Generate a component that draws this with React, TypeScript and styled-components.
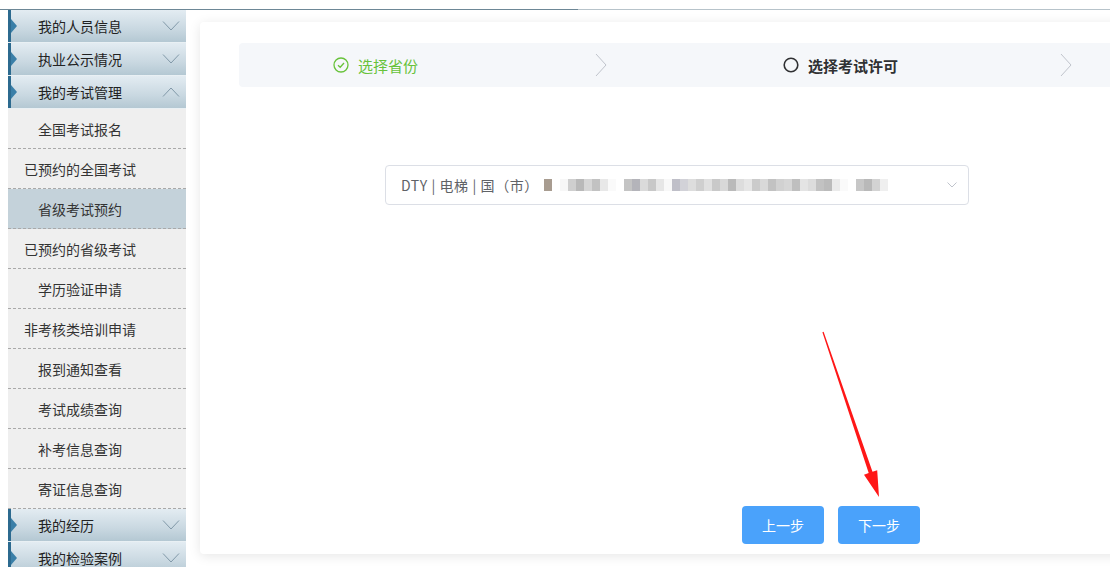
import React from 'react';
import styled, { createGlobalStyle } from 'styled-components';

const GlobalStyle = createGlobalStyle`
  html, body {
    margin: 0;
    padding: 0;
    background: #fff;
    overflow: hidden;
  }
  body {
    font-family: "Noto Sans CJK SC", "Liberation Sans", sans-serif;
    color: #333;
  }
`;

const Page = styled.div`
  position: relative;
  width: 1110px;
  height: 567px;
  overflow: hidden;
  background: #fff;
`;

const TopRule = styled.div`
  height: 9px;
  border-bottom: 1px solid #6d8796;
  background: #fff;
  position: relative;
  &::after {
    content: '';
    position: absolute;
    left: 578px;
    right: 0;
    bottom: -1px;
    height: 1px;
    background: #b7c3ca;
  }
`;

const Body = styled.div`
  display: flex;
  align-items: flex-start;
`;

const Sidebar = styled.nav`
  margin-left: 8px;
  width: 178px;
  flex-shrink: 0;
  display: flex;
  flex-direction: column;
`;

const GroupHeader = styled.div`
  position: relative;
  height: 32px;
  border-bottom: 1px solid #e9f0f4;
  background: linear-gradient(#e3ecf2, #c9d8e1 60%, #b4c8d3);
  display: flex;
  align-items: center;
  padding-left: 30px;
  font-size: 14px;
  color: #222;
  &::before {
    content: '';
    position: absolute;
    left: 0;
    top: 0;
    bottom: 0;
    width: 3px;
    background: #2c6a8f;
  }
  &::after {
    content: '';
    position: absolute;
    left: 3px;
    top: 50%;
    margin-top: -7px;
    border-left: 6px solid #3a7fa8;
    border-top: 7px solid transparent;
    border-bottom: 7px solid transparent;
  }
`;

const HeaderLabel = styled.span`
  flex: 1;
`;

const HeaderCaret = styled.svg`
  width: 18px;
  height: 10px;
  margin-right: 6px;
`;

const SubItem = styled.div<{ $indent: boolean; $active?: boolean }>`
  height: 39px;
  border-bottom: 1px dashed #a9a9a9;
  background: ${({ $active }) => ($active ? '#c4d2da' : '#efefef')};
  display: flex;
  align-items: center;
  padding-left: ${({ $indent }) => ($indent ? '30px' : '16px')};
  font-size: 14px;
  color: #333;
`;

const Main = styled.main`
  flex: 1;
  padding: 12px 0 0 14px;
`;

const Card = styled.section`
  width: 1000px;
  height: 532px;
  box-sizing: border-box;
  background: #fff;
  border-radius: 4px;
  box-shadow: 0 2px 12px rgba(0, 0, 0, 0.1);
  padding: 21px 0 0 39px;
  display: flex;
  flex-direction: column;
`;

const Steps = styled.div`
  height: 44px;
  background: #f5f7fa;
  border-radius: 4px;
  display: flex;
  align-items: center;
  padding-left: 94px;
`;

const Step = styled.div`
  width: 450px;
  flex-shrink: 0;
  display: flex;
  align-items: center;
`;

const StepTitle = styled.span<{ $done?: boolean }>`
  margin-left: 9px;
  font-size: 15px;
  color: ${({ $done }) => ($done ? '#67c23a' : '#303133')};
  font-weight: ${({ $done }) => ($done ? 400 : 700)};
`;

const StepArrow = styled.div`
  flex: 1;
  display: flex;
  justify-content: center;
`;

const SelectBox = styled.div`
  margin: 78px 0 0 146px;
  width: 584px;
  height: 40px;
  box-sizing: border-box;
  border: 1px solid #dcdfe6;
  border-radius: 4px;
  display: flex;
  align-items: center;
  padding: 0 11px 0 15px;
  font-size: 14px;
  color: #606266;
`;

const SelectText = styled.span`
  white-space: nowrap;
  letter-spacing: 0.6px;
`;

const Mosaic = styled.div`
  display: flex;
  height: 12px;
  margin-left: 5px;
  flex: 1;
`;

const MosaicCell = styled.span<{ $shade: string }>`
  width: 8px;
  height: 100%;
  background: ${({ $shade }) => $shade};
`;

const Actions = styled.div`
  margin-top: auto;
  margin-bottom: 10px;
  padding-left: 503px;
  display: flex;
  gap: 14px;
`;

const Button = styled.button`
  width: 82px;
  height: 38px;
  border: none;
  border-radius: 4px;
  background: #4aa2fb;
  color: #fff;
  font-size: 14px;
  font-family: inherit;
  cursor: pointer;
`;

const Annotation = styled.svg`
  position: absolute;
  left: 0;
  top: 0;
  pointer-events: none;
`;

const groupsTop = ['我的人员信息', '执业公示情况'];

const examItems = [
  { label: '全国考试报名', indent: true },
  { label: '已预约的全国考试', indent: false },
  { label: '省级考试预约', indent: true, active: true },
  { label: '已预约的省级考试', indent: false },
  { label: '学历验证申请', indent: true },
  { label: '非考核类培训申请', indent: false },
  { label: '报到通知查看', indent: true },
  { label: '考试成绩查询', indent: true },
  { label: '补考信息查询', indent: true },
  { label: '寄证信息查询', indent: true },
];

const groupsBottom = ['我的经历', '我的检验案例'];

// masked part of the licence name
const shades = [
  '#a89c90', '#fff', '#f7f7f7', '#cfcfcf', '#b9b9b9', '#d6d6d6', '#c2c2c2', '#e8e8e8',
  '#fafafa', '#fff', '#c4c4c4', '#b4b4ba', '#dadada', '#c8c8c8', '#e6e6e6', '#f8f8f8',
  '#bfbfc8', '#d2d2d8', '#dddddd', '#cfcfcf', '#e0e0e0', '#c9c9c9', '#d8d8d8', '#bababa',
  '#dddddd', '#e6e6e6', '#cbcbcb', '#d9d9d9', '#c2c2c2', '#d1d1d1', '#d6d6d6', '#bfbfbf',
  '#e4e4e4', '#dcdcdc', '#c2c2c2', '#bbbbbb', '#ebebeb', '#fafafa', '#fff', '#c7c7c7',
  '#b9b9b9', '#d3d3d3', '#efefef',
];

const Caret = ({ up }: { up?: boolean }) => (
  <HeaderCaret viewBox="0 0 18 10">
    <polyline
      points={up ? '1,9.5 9,1 17,9.5' : '1,0.5 9,9 17,0.5'}
      fill="none"
      stroke="#8199a8"
      strokeWidth="1"
    />
  </HeaderCaret>
);

const Group = ({ label, up }: { label: string; up?: boolean }) => (
  <GroupHeader>
    <HeaderLabel>{label}</HeaderLabel>
    <Caret up={up} />
  </GroupHeader>
);

const Chevron = () => (
  <svg width="12" height="24" viewBox="0 0 12 24">
    <polyline points="1,1 11,12 1,23" fill="none" stroke="#c0c4cc" strokeWidth="1" />
  </svg>
);

const App = () => (
  <Page>
    <GlobalStyle />
    <TopRule />
    <Body>
      <Sidebar>
        {groupsTop.map((g) => (
          <Group key={g} label={g} />
        ))}
        <Group label="我的考试管理" up />
        {examItems.map((item) => (
          <SubItem key={item.label} $indent={item.indent} $active={item.active}>
            {item.label}
          </SubItem>
        ))}
        {groupsBottom.map((g) => (
          <Group key={g} label={g} />
        ))}
      </Sidebar>
      <Main>
        <Card>
          <Steps>
            <Step>
              <svg width="16" height="16" viewBox="0 0 16 16">
                <circle cx="8" cy="8" r="7" fill="none" stroke="#67c23a" strokeWidth="1.3" />
                <polyline points="5,8.2 7.2,10.3 11,6" fill="none" stroke="#67c23a" strokeWidth="1.3" />
              </svg>
              <StepTitle $done>选择省份</StepTitle>
              <StepArrow>
                <Chevron />
              </StepArrow>
            </Step>
            <Step>
              <svg width="16" height="16" viewBox="0 0 16 16">
                <circle cx="8" cy="8" r="6.8" fill="none" stroke="#303133" strokeWidth="1.6" />
              </svg>
              <StepTitle>选择考试许可</StepTitle>
              <StepArrow>
                <Chevron />
              </StepArrow>
            </Step>
          </Steps>
          <SelectBox>
            <SelectText>DTY | 电梯 | 国（市）</SelectText>
            <Mosaic>
              {shades.map((s, i) => (
                <MosaicCell key={i} $shade={s} />
              ))}
            </Mosaic>
            <svg width="10" height="6" viewBox="0 0 10 6">
              <polyline points="0.5,0.5 5,5 9.5,0.5" fill="none" stroke="#c0c4cc" strokeWidth="1" />
            </svg>
          </SelectBox>
          <Actions>
            <Button>上一步</Button>
            <Button>下一步</Button>
          </Actions>
        </Card>
      </Main>
    </Body>
    <Annotation width="1110" height="567" viewBox="0 0 1110 567">
      <polygon
        points="822.4,332.2 868.7,473 864,474.7 879,497 877.2,470.2 872.5,471.8 823.6,331.8"
        fill="#ff1717"
      />
    </Annotation>
  </Page>
);

export default App;
